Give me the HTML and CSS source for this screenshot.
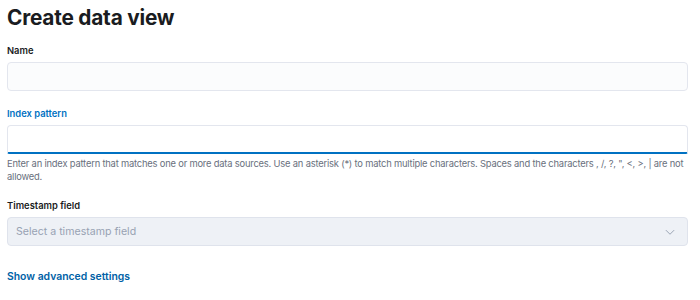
FILE: index.html
```html
<!DOCTYPE html>
<html lang="en">
<head>
    <meta charset="UTF-8">
    <title>Create data view</title>
    <link rel="stylesheet" href="styles.css">
</head>
<body>
    <div class="page">
        <h1>Create data view</h1>
        <div class="form-row">
            <label class="form-label">Name</label>
            <input class="field" type="text">
        </div>
        <div class="form-row">
            <label class="form-label focused">Index pattern</label>
            <input class="field active" type="text">
            <div class="help-text">Enter an index pattern that matches one or more data sources. Use an asterisk (*) to match multiple characters. Spaces and the characters , /, ?, ", &lt;, &gt;, | are not allowed.</div>
        </div>
        <div class="form-row">
            <label class="form-label">Timestamp field</label>
            <div class="field select">
                <span class="placeholder">Select a timestamp field</span>
                <svg class="chevron" width="12" height="12" viewBox="0 0 16 16"><path d="M2.5 5.5 8 11l5.5-5.5" fill="none" stroke="#98a2b3" stroke-width="1.3"/></svg>
            </div>
        </div>
        <a class="advanced" href="#">Show advanced settings</a>
    </div>
</body>
</html>
```

FILE: styles.css
```css
body {
    margin: 0;
    font-family: "Inter", "Liberation Sans", sans-serif;
    color: #1a1c21;
    background: #fff;
}
.page {
    padding: 4px 12px 0 7px;
}
h1 {
    font-size: 20.8px;
    font-weight: 700;
    margin: 0;
    line-height: 28px;
    letter-spacing: -0.2px;
}
.form-row {
    display: flex;
    flex-direction: column;
    margin-top: 17px;
}
h1 + .form-row {
    margin-top: 13px;
}
.form-label {
    font-size: 9.4px;
    font-weight: 600;
    line-height: 12px;
    margin-bottom: 5px;
}
.form-label.focused {
    color: #0071c2;
}
.field {
    box-sizing: border-box;
    height: 29px;
    width: 100%;
    border: 1px solid #e3e6ee;
    border-radius: 4px;
    background: #fbfcfd;
    font-family: inherit;
    margin: 0;
    padding: 0 8px;
}
.field.active {
    background: #fff;
    border-bottom: 2px solid #0071c2;
    border-radius: 4px 4px 2px 2px;
}
.help-text {
    font-size: 9.4px;
    letter-spacing: -0.2px;
    line-height: 12.5px;
    color: #69707d;
    margin-top: 4px;
}
.select {
    display: flex;
    align-items: center;
    justify-content: space-between;
    background: #eef1f6;
    border-color: #dfe3ec;
}
.placeholder {
    font-size: 10.6px;
    color: #98a2b3;
}
.chevron {
    margin-right: 3px;
}
.advanced {
    display: inline-block;
    margin-top: 24px;
    font-size: 10.4px;
    font-weight: 600;
    color: #0061a6;
    text-decoration: none;
}
```
